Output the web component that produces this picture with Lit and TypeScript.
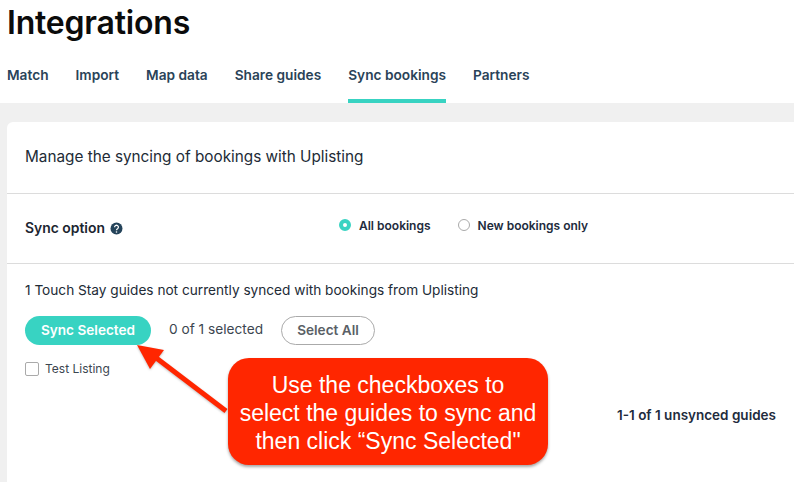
import { LitElement, css, html } from 'lit';
import { customElement } from 'lit/decorators.js';

const TABS = ['Match', 'Import', 'Map data', 'Share guides', 'Sync bookings', 'Partners'];

@customElement('app-root')
export class AppRoot extends LitElement {
    static styles = css`
        :host {
            display: block;
            position: relative;
            width: 794px;
            height: 482px;
            overflow: hidden;
            background: #f0f0f0;
            font-family: Inter, "Liberation Sans", sans-serif;
            color: #1f2d3d;
        }

        .header {
            background: #fff;
            height: 103px;
            padding-left: 7px;
        }

        h1 {
            margin: 0;
            height: 62px;
            padding-top: 3px;
            box-sizing: border-box;
            font-size: 32px;
            line-height: 40px;
            font-weight: 600;
            letter-spacing: -0.2px;
            color: #0b0b0b;
        }

        .tabs {
            display: flex;
            gap: 27px;
        }

        .tab {
            height: 41px;
            box-sizing: border-box;
            padding-top: 4px;
            font-size: 13.7px;
            line-height: 18px;
            font-weight: 600;
            color: #2a4358;
        }

        .tab.active {
            border-bottom: 4px solid #38d3c2;
        }

        .card {
            margin: 19px 0 0 7px;
            width: 830px;
            height: 400px;
            background: #fff;
            border-radius: 6px;
            font-size: 13px;
        }

        .row {
            box-sizing: border-box;
            padding: 0 18px;
            border-bottom: 1px solid #dcdcdc;
        }

        .intro {
            height: 72px;
            display: flex;
            align-items: center;
            font-size: 15.3px;
            padding-bottom: 2px;
            color: #222b36;
        }

        .option {
            height: 70px;
            display: flex;
            align-items: center;
            padding-bottom: 1px;
        }

        .option-label {
            display: flex;
            align-items: center;
            gap: 5px;
            width: 314px;
            font-size: 13.9px;
            font-weight: 600;
            color: #1c2530;
        }

        .radios {
            display: flex;
            gap: 27px;
            margin-top: -6px;
            font-size: 12px;
            font-weight: 600;
            color: #222b3d;
        }

        .radio {
            display: flex;
            align-items: center;
            gap: 8px;
        }

        .dot {
            width: 12px;
            height: 12px;
            border-radius: 50%;
            box-sizing: border-box;
            border: 1px solid #aaa;
            background: #fff;
        }

        .dot.on {
            border: 4px solid #38d3c2;
        }

        .sync {
            padding: 17px 18px 0;
            color: #222b36;
        }

        .sync p {
            margin: 0;
            font-size: 13.65px;
            line-height: 18px;
        }

        .actions {
            display: flex;
            align-items: center;
            margin-top: 17px;
        }

        .btn {
            box-sizing: border-box;
            height: 29px;
            padding-bottom: 1px;
            border-radius: 15px;
            display: flex;
            align-items: center;
            justify-content: center;
            font-size: 13.6px;
            font-weight: 600;
        }

        .primary {
            width: 126px;
            background: #38d3c2;
            color: #fff;
        }

        .count {
            margin-left: 18px;
            width: 112px;
            padding-bottom: 3px;
            font-size: 13.7px;
            color: #3c4650;
        }

        .outline {
            width: 94px;
            border: 1px solid #aaa;
            color: #5a5f66;
        }

        .check {
            display: flex;
            align-items: center;
            gap: 6px;
            margin-top: 15px;
            font-size: 12px;
            line-height: 18px;
            color: #3c4650;
        }

        .box {
            width: 12px;
            height: 12px;
            border: 1px solid #aaa;
            border-radius: 2px;
        }

        .pager {
            margin: 28px 0 0;
            width: 751px;
            text-align: right;
            font-size: 13.5px;
            line-height: 18px;
            font-weight: 600;
            color: #222b3d;
        }

        .arrow {
            position: absolute;
            left: 130px;
            top: 335px;
            filter: drop-shadow(0 1px 1px rgba(0, 0, 0, 0.25));
        }

        .callout {
            position: absolute;
            left: 228px;
            top: 358px;
            width: 320px;
            height: 107px;
            box-sizing: border-box;
            padding-top: 13px;
            border-radius: 21px;
            background: #ff2600;
            box-shadow: 0 2px 3px rgba(0, 0, 0, 0.35);
            color: #fff;
            font-family: "Liberation Sans", Arial, sans-serif;
            font-size: 23px;
            line-height: 28px;
            text-align: center;
        }
    `;

    render() {
        return html`
            <div class="header">
                <h1>Integrations</h1>
                <div class="tabs">
                    ${TABS.map(tab => html`<div class="tab ${tab === 'Sync bookings' ? 'active' : ''}">${tab}</div>`)}
                </div>
            </div>

            <div class="card">
                <div class="row intro">Manage the syncing of bookings with Uplisting</div>
                <div class="row option">
                    <div class="option-label">
                        Sync option
                        <svg width="13" height="13" viewBox="0 0 13 13">
                            <circle cx="6.5" cy="6.5" r="6" fill="#24435a"></circle>
                            <path d="M4.6 5.2a1.9 1.9 0 1 1 2.9 1.6c-.6.4-1 .7-1 1.4" fill="none" stroke="#fff" stroke-width="1.3"></path>
                            <circle cx="6.5" cy="10" r=".8" fill="#fff"></circle>
                        </svg>
                    </div>
                    <div class="radios">
                        <div class="radio"><span class="dot on"></span>All bookings</div>
                        <div class="radio"><span class="dot"></span>New bookings only</div>
                    </div>
                </div>
                <div class="sync">
                    <p>1 Touch Stay guides not currently synced with bookings from Uplisting</p>
                    <div class="actions">
                        <div class="btn primary">Sync Selected</div>
                        <div class="count">0 of 1 selected</div>
                        <div class="btn outline">Select All</div>
                    </div>
                    <div class="check"><span class="box"></span>Test Listing</div>
                    <div class="pager">1-1 of 1 unsynced guides</div>
                </div>
            </div>

            <svg class="arrow" width="100" height="80" viewBox="0 0 100 80">
                <path d="M96 76 L25 22" stroke="#ff2600" stroke-width="5" fill="none"></path>
                <path d="M7 10 L34 15 L20 34 Z" fill="#ff2600"></path>
            </svg>

            <div class="callout">Use the checkboxes to<br />select the guides to sync and<br />then click “Sync Selected"</div>
        `;
    }
}
